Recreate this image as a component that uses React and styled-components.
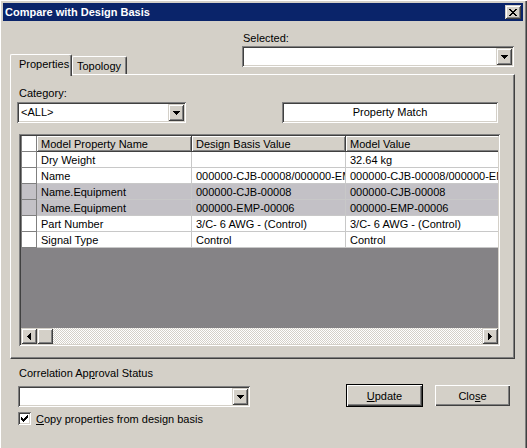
import React from 'react';
import styled, { createGlobalStyle, css } from 'styled-components';

const GlobalStyle = createGlobalStyle`
    html, body {
        margin: 0;
        padding: 0;
        overflow: hidden;
        background: #d4d0c8;
    }
    body {
        font-family: "Liberation Sans", Arial, sans-serif;
        font-size: 11px;
        color: #000;
    }
`;

const raised = css`
    background: #d4d0c8;
    box-shadow: inset 1px 1px 0 #d4d0c8, inset -1px -1px 0 #404040,
        inset 2px 2px 0 #fff, inset -2px -2px 0 #808080;
`;

const sunken = css`
    box-shadow: inset 1px 1px 0 #808080, inset -1px -1px 0 #fff,
        inset 2px 2px 0 #404040, inset -2px -2px 0 #d4d0c8;
`;

const Window = styled.div`
    box-sizing: border-box;
    width: 527px;
    height: 452px;
    padding: 3px 4px 0 3px;
    background: #d4d0c8;
    box-shadow: inset 1px 1px 0 #fff, inset -1px -1px 0 #404040, inset -2px -2px 0 #808080;
    display: flex;
    flex-direction: column;
`;

const TitleBar = styled.div`
    flex: none;
    height: 18px;
    padding: 0 2px;
    background: #0a246a;
    color: #fff;
    font-weight: bold;
    display: flex;
    align-items: center;
    justify-content: space-between;
`;

const CaptionButton = styled.div`
    box-sizing: border-box;
    width: 16px;
    height: 14px;
    ${raised};
    display: flex;
    align-items: center;
    justify-content: center;
`;

const HeaderRow = styled.div`
    position: relative;
    z-index: 1;
    width: 505px;
    height: 55px;
    margin: 0 0 -2px 7px;
    display: flex;
    align-items: flex-end;
    justify-content: space-between;
`;

const TabStrip = styled.div`
    height: 22px;
    display: flex;
    align-items: flex-start;
`;

const Tab = styled.div`
    box-sizing: border-box;
    width: ${p => p.$width}px;
    height: ${p => (p.$active ? 22 : 18)}px;
    margin-top: ${p => (p.$active ? 0 : 2)}px;
    padding: 3px 0 0 ${p => p.$pad}px;
    line-height: 13px;
    background: #d4d0c8;
    border-left: 1px solid #fff;
    border-top: 1px solid #fff;
    border-right: 1px solid #404040;
    border-radius: 2px 2px 0 0;
    box-shadow: inset -1px 0 0 #808080;
`;

const Field = styled.div`
    display: flex;
    flex-direction: column;
    gap: ${p => p.$gap || 2}px;
`;

const SelectedGroup = styled(Field)`
    margin: 0 1px 9px 0;
`;

const Label = styled.div`
    line-height: 13px;
    padding-left: ${p => p.$indent || 0}px;
    white-space: nowrap;
`;

const Combo = styled.div`
    box-sizing: border-box;
    width: ${p => p.$width}px;
    height: 21px;
    margin-top: ${p => p.$top || 0}px;
    padding: 2px;
    background: #fff;
    ${sunken};
    display: flex;
`;

const ComboText = styled.div`
    flex: 1;
    padding-left: 2px;
    line-height: 17px;
    white-space: nowrap;
    overflow: hidden;
`;

const DropButton = styled.div`
    box-sizing: border-box;
    flex: none;
    width: 16px;
    height: 17px;
    ${raised};
    display: flex;
    align-items: center;
    justify-content: center;
`;

const Panel = styled.div`
    box-sizing: border-box;
    width: 505px;
    height: 285px;
    margin-left: 7px;
    padding: 12px 14px 12px 6px;
    border-left: 1px solid #fff;
    border-top: 1px solid #fff;
    border-right: 1px solid #404040;
    border-bottom: 1px solid #404040;
    box-shadow: inset -1px -1px 0 #808080;
    display: flex;
    flex-direction: column;
`;

const FilterRow = styled.div`
    display: flex;
    align-items: flex-end;
`;

const MatchBox = styled.div`
    box-sizing: border-box;
    width: 216px;
    height: 21px;
    margin: 0 2px 0 auto;
    background: #fff;
    ${sunken};
    line-height: 21px;
    text-align: center;
`;

const ListFrame = styled.div`
    box-sizing: border-box;
    width: 481px;
    height: 212px;
    margin: 11px 0 0 2px;
    padding: 2px;
    ${sunken};
    display: flex;
    flex-direction: column;
`;

const ListArea = styled.div`
    flex: 1;
    overflow: hidden;
    background: #858386;
`;

const Row = styled.div`
    display: grid;
    grid-template-columns: 16px 155px 154px 170px;
    height: 16px;
    background: ${p => (p.$header ? '#d4d0c8' : p.$selected ? '#c3c1c6' : '#fff')};
`;

const CheckCell = styled.div`
    box-sizing: border-box;
    border-left: 1px solid #808080;
    border-right: 1px solid #808080;
    border-bottom: 1px solid #808080;
`;

const HeadCell = styled.div`
    box-sizing: border-box;
    padding: 1px 0 0 4px;
    line-height: 14px;
    white-space: nowrap;
    overflow: hidden;
    border-right: 1px solid #404040;
    border-bottom: 1px solid #404040;
    box-shadow: inset 1px 1px 0 #fff, inset -1px -1px 0 #808080;
`;

const Cell = styled.div`
    box-sizing: border-box;
    padding: 1px 0 0 4px;
    line-height: 14px;
    white-space: nowrap;
    overflow: hidden;
    border-right: 1px solid #c8c8c8;
    border-bottom: 1px solid #c8c8c8;
`;

const HScroll = styled.div`
    flex: none;
    height: 16px;
    display: flex;
`;

const ScrollButton = styled.div`
    box-sizing: border-box;
    flex: none;
    width: 16px;
    height: 16px;
    ${raised};
    display: flex;
    align-items: center;
    justify-content: center;
`;

const ScrollTrack = styled.div`
    flex: 1;
    background-color: #fff;
    background-image: conic-gradient(#d4d0c8 25%, #fff 0 50%, #d4d0c8 0 75%, #fff 0);
    background-size: 2px 2px;
`;

const Footer = styled.div`
    padding: 8px 13px 0 15px;
    display: flex;
    flex-direction: column;
`;

const FooterRow = styled.div`
    margin-top: 4px;
    display: flex;
    align-items: flex-start;
`;

const Buttons = styled.div`
    margin-left: auto;
    display: flex;
    align-items: flex-start;
    gap: 12px;
`;

const PushButton = styled.div`
    box-sizing: border-box;
    width: ${p => (p.$default ? 77 : 75)}px;
    height: ${p => (p.$default ? 23 : 21)}px;
    margin-top: ${p => (p.$default ? 0 : 1)}px;
    border: ${p => (p.$default ? '1px solid #000' : 'none')};
    background: #d4d0c8;
    box-shadow: inset 1px 1px 0 #fff, inset -1px -1px 0 #404040, inset -2px -2px 0 #808080;
    display: flex;
    align-items: center;
    justify-content: center;
`;

const Key = styled.span`
    text-decoration: underline;
`;

const CheckRow = styled.div`
    margin-top: 5px;
    display: flex;
    align-items: center;
    gap: 5px;
`;

const CheckBox = styled.div`
    box-sizing: border-box;
    width: 13px;
    height: 13px;
    background: #fff;
    ${sunken};
    display: flex;
    align-items: center;
    justify-content: center;
`;

const CLOSE_X = [
    'XX....XX',
    '.XX..XX.',
    '..XXXX..',
    '...XX...',
    '..XXXX..',
    '.XX..XX.',
    'XX....XX',
];

const CHECK = [
    '......X',
    '.....XX',
    'X...XXX',
    'XX.XXX.',
    'XXXXX..',
    '.XXX...',
    '..X....',
];

const Glyph = ({ pattern }) => (
    <svg width={pattern[0].length} height={pattern.length} shapeRendering="crispEdges">
        {pattern.map((line, y) =>
            line.split('').map((c, x) =>
                c === 'X' ? <rect key={`${x}-${y}`} x={x} y={y} width="1" height="1" fill="#000" /> : null
            )
        )}
    </svg>
);

const Arrow = ({ dir }) => {
    const sizes = [7, 5, 3, 1];
    if (dir === 'down') {
        return (
            <svg width="7" height="4" shapeRendering="crispEdges">
                {sizes.map((w, i) => (
                    <rect key={i} x={(7 - w) / 2} y={i} width={w} height="1" fill="#000" />
                ))}
            </svg>
        );
    }
    return (
        <svg width="4" height="7" shapeRendering="crispEdges">
            {sizes.map((h, i) => (
                <rect key={i} x={dir === 'left' ? 3 - i : i} y={(7 - h) / 2} width="1" height={h} fill="#000" />
            ))}
        </svg>
    );
};

const rows = [
    { name: 'Dry Weight', basis: '', model: '32.64 kg' },
    { name: 'Name', basis: '000000-CJB-00008/000000-EMP-00006', model: '000000-CJB-00008/000000-EMP-00006' },
    { name: 'Name.Equipment', basis: '000000-CJB-00008', model: '000000-CJB-00008', selected: true },
    { name: 'Name.Equipment', basis: '000000-EMP-00006', model: '000000-EMP-00006', selected: true },
    { name: 'Part Number', basis: '3/C- 6 AWG - (Control)', model: '3/C- 6 AWG - (Control)' },
    { name: 'Signal Type', basis: 'Control', model: 'Control' },
];

const ComboBox = ({ width, top, children }) => (
    <Combo $width={width} $top={top}>
        <ComboText>{children}</ComboText>
        <DropButton><Arrow dir="down" /></DropButton>
    </Combo>
);

export default function App() {
    return (
        <>
            <GlobalStyle />
            <Window>
                <TitleBar>
                    <span>Compare with Design Basis</span>
                    <CaptionButton><Glyph pattern={CLOSE_X} /></CaptionButton>
                </TitleBar>

                <HeaderRow>
                    <TabStrip>
                        <Tab $active $width={62} $pad={8}>Properties</Tab>
                        <Tab $width={55} $pad={4}>Topology</Tab>
                    </TabStrip>
                    <SelectedGroup $gap={1}>
                        <Label $indent={1}>Selected:</Label>
                        <ComboBox width={272} />
                    </SelectedGroup>
                </HeaderRow>

                <Panel>
                    <FilterRow>
                        <Field>
                            <Label $indent={2}>Category:</Label>
                            <ComboBox width={169}>&lt;ALL&gt;</ComboBox>
                        </Field>
                        <MatchBox>Property Match</MatchBox>
                    </FilterRow>

                    <ListFrame>
                        <ListArea>
                            <Row $header>
                                <CheckCell style={{ background: '#fff' }} />
                                <HeadCell>Model Property Name</HeadCell>
                                <HeadCell>Design Basis Value</HeadCell>
                                <HeadCell>Model Value</HeadCell>
                            </Row>
                            {rows.map((r, i) => (
                                <Row key={i} $selected={r.selected}>
                                    <CheckCell />
                                    <Cell>{r.name}</Cell>
                                    <Cell>{r.basis}</Cell>
                                    <Cell>{r.model}</Cell>
                                </Row>
                            ))}
                        </ListArea>
                        <HScroll>
                            <ScrollButton><Arrow dir="left" /></ScrollButton>
                            <ScrollButton />
                            <ScrollTrack />
                            <ScrollButton><Arrow dir="right" /></ScrollButton>
                        </HScroll>
                    </ListFrame>
                </Panel>

                <Footer>
                    <Label $indent={1}>Correlation Ap<Key>p</Key>roval Status</Label>
                    <FooterRow>
                        <ComboBox width={232} top={2} />
                        <Buttons>
                            <PushButton $default><Key>U</Key>pdate</PushButton>
                            <PushButton>Clo<Key>s</Key>e</PushButton>
                        </Buttons>
                    </FooterRow>
                    <CheckRow>
                        <CheckBox><Glyph pattern={CHECK} /></CheckBox>
                        <span><Key>C</Key>opy properties from design basis</span>
                    </CheckRow>
                </Footer>
            </Window>
        </>
    );
}
